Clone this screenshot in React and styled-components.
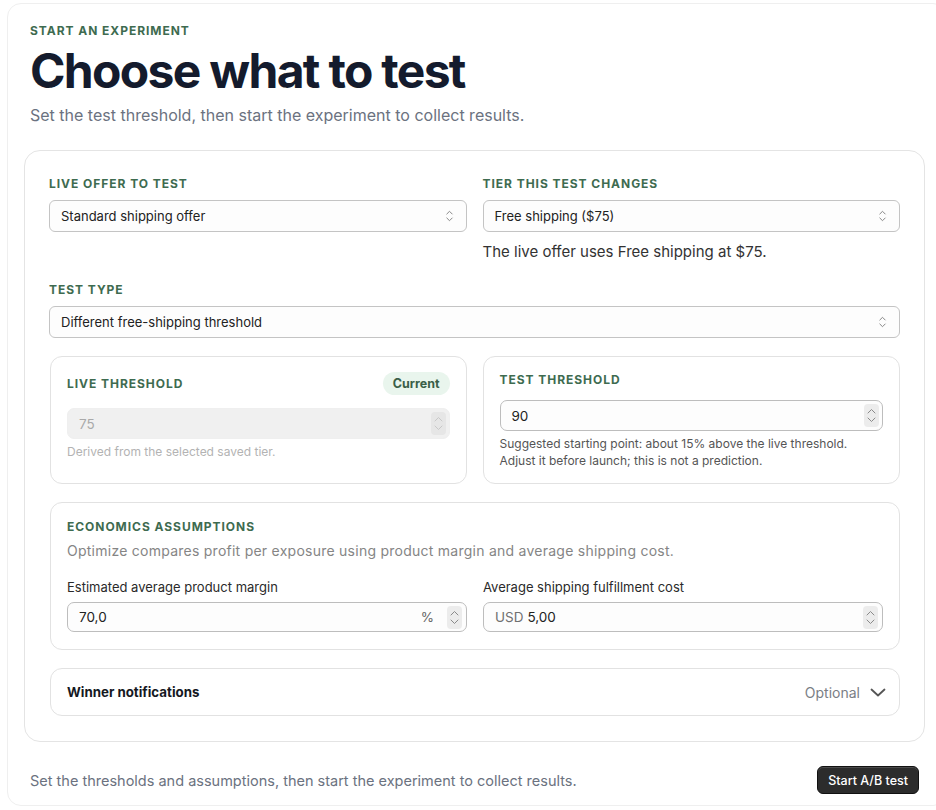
import React from "react";
import styled, { createGlobalStyle } from "styled-components";

const Global = createGlobalStyle`
  html, body { margin: 0; padding: 0; background: #fff; overflow: hidden; }
  body { font-family: Inter, "Noto Sans", Arial, sans-serif; color: #1f2328; -webkit-font-smoothing: antialiased; }
  * { box-sizing: border-box; }
`;

const Page = styled.div`
  padding: 3px 0 0 7px;
  width: 960px;
`;

const Shell = styled.div`
  width: 940px;
  border: 1px solid #efefef;
  border-radius: 14px;
  padding: 19px 0 11px 16px;
  background: #fff;
`;

const Header = styled.header`
  padding: 0 0 0 6px;
`;

const Eyebrow = styled.div`
  font-size: 12px;
  font-weight: 700;
  letter-spacing: 0.08em;
  color: #3e6b50;
  text-transform: uppercase;
  line-height: 16px;
`;

const Title = styled.h1`
  margin: 3px 0 0;
  font-size: 48px;
  font-weight: 700;
  letter-spacing: -0.035em;
  line-height: 57px;
  color: #141b2d;
`;

const Lead = styled.p`
  margin: 4px 0 0;
  font-size: 16px;
  line-height: 24px;
  color: #6b7280;
`;

const Card = styled.section`
  margin-top: 23px;
  width: 901px;
  border: 1px solid #e4e4e4;
  border-radius: 16px;
  padding: 25px 24px 25px;
  display: flex;
  flex-direction: column;
`;

const Grid = styled.div`
  display: grid;
  grid-template-columns: 1fr 1fr;
  column-gap: 16px;
  align-items: start;
  margin-top: ${(p) => p.$mt || 0}px;
`;

const Field = styled.div`
  display: flex;
  flex-direction: column;
  margin-top: ${(p) => p.$mt || 0}px;
`;

const Label = styled.div`
  font-size: 12px;
  font-weight: 700;
  letter-spacing: 0.08em;
  text-transform: uppercase;
  color: #3e6b50;
  line-height: 16px;
  margin-bottom: ${(p) => (p.$mb != null ? p.$mb : 8)}px;
`;

const SelectBox = styled.div`
  height: 32px;
  border: 1px solid #c4c4c4;
  border-radius: 6px;
  background: #fdfdfd;
  display: flex;
  align-items: center;
  justify-content: space-between;
  padding: 0 12px 0 11px;
  font-size: 13px;
  color: #222;
`;

const Note = styled.div`
  margin-top: 10px;
  font-size: 15px;
  line-height: 20px;
  color: #333;
`;

const UpDown = () => (
  <svg width="9" height="14" viewBox="0 0 9 14" fill="none" stroke="#888" strokeWidth="1" strokeLinecap="round" strokeLinejoin="round">
    <path d="M1.8 5 L4.5 2.3 L7.2 5" />
    <path d="M1.8 9 L4.5 11.7 L7.2 9" />
  </svg>
);

const Select = ({ children }) => (
  <SelectBox>
    <span>{children}</span>
    <UpDown />
  </SelectBox>
);

const Panel = styled.div`
  border: 1px solid #e2e2e2;
  border-radius: 12px;
  padding: ${(p) => p.$pad || "16px"};
  margin-left: ${(p) => p.$ml || 0}px;
  margin-top: ${(p) => p.$mt || 0}px;
  display: flex;
  flex-direction: column;
  min-height: ${(p) => p.$minh || 0}px;
`;

const PanelHead = styled.div`
  display: flex;
  align-items: center;
  justify-content: space-between;
  margin-bottom: 13px;
`;

const Pill = styled.span`
  background: #e9f5ed;
  color: #3a5f48;
  font-size: 12.5px;
  font-weight: 700;
  border-radius: 999px;
  padding: 4px 10px;
  line-height: 15px;
`;

const InputBox = styled.div`
  height: ${(p) => p.$h || 31}px;
  border: 1px solid ${(p) => (p.$disabled ? "#efefef" : "#bdbdbd")};
  background: ${(p) => (p.$disabled ? "#f0f0f0" : "#fdfdfd")};
  border-radius: 7px;
  display: flex;
  align-items: center;
  padding: 0 3px 0 11px;
  font-size: 13.5px;
  color: ${(p) => (p.$disabled ? "#a9a9a9" : "#222")};
`;

const Value = styled.span`
  flex: 1;
`;

const Prefix = styled.span`
  color: #707070;
  margin-right: 4px;
`;

const Suffix = styled.span`
  color: #666;
  margin-right: 13px;
`;

const SpinBox = styled.span`
  width: 15px;
  height: 23px;
  border-radius: 4px;
  background: ${(p) => (p.$disabled ? "#e6e6e6" : "#ececec")};
  display: flex;
  align-items: center;
  justify-content: center;
  margin-right: ${(p) => p.$mr || 0}px;
`;

const Spinner = ({ disabled, mr }) => (
  <SpinBox $disabled={disabled} $mr={mr}>
    <svg width="11" height="17" viewBox="0 0 11 17" fill="none" stroke={disabled ? "#c8c8c8" : "#8a8a8a"} strokeWidth="1" strokeLinecap="round" strokeLinejoin="round">
      <path d="M2 6 L5.5 2.5 L9 6" />
      <path d="M2 11 L5.5 14.5 L9 11" />
    </svg>
  </SpinBox>
);

const Help = styled.div`
  margin-top: ${(p) => p.$mt || 4}px;
  font-size: 12px;
  line-height: 17px;
  color: ${(p) => (p.$muted ? "#b3b3b3" : "#555")};
`;

const Desc = styled.div`
  margin-top: 6px;
  font-size: 14px;
  letter-spacing: 0.25px;
  line-height: 20px;
  color: #858585;
`;

const FieldLabel = styled.div`
  font-size: 13px;
  line-height: 16px;
  color: #2a2a2a;
  margin-bottom: 7px;
`;

const Disclosure = styled.div`
  margin: 18px 0 0 1px;
  border: 1px solid #e2e2e2;
  border-radius: 12px;
  height: 48px;
  display: flex;
  align-items: center;
  justify-content: space-between;
  padding: 0 12px 0 16px;
`;

const DiscTitle = styled.span`
  font-size: 13.3px;
  font-weight: 700;
  color: #15191f;
`;

const DiscSide = styled.span`
  display: flex;
  align-items: center;
  gap: 9px;
  font-size: 14px;
  color: #7a7e85;
`;

const Footer = styled.footer`
  width: 901px;
  margin-top: 24px;
  padding: 0 6px 0 6px;
  display: flex;
  align-items: center;
  justify-content: space-between;
`;

const FootText = styled.span`
  font-size: 14.5px;
  color: #6b7280;
`;

const Button = styled.button`
  height: 28px;
  padding: 0 10px;
  border-radius: 6px;
  border: 1px solid #111;
  background: #2c2c2c;
  color: #fff;
  font-family: inherit;
  font-size: 12.5px;
  font-weight: 500;
  box-shadow: inset 0 1px 0 rgba(255,255,255,0.15);
`;

export default function App() {
  return (
    <Page>
      <Global />
      <Shell>
        <Header>
          <Eyebrow>Start an experiment</Eyebrow>
          <Title>Choose what to test</Title>
          <Lead>Set the test threshold, then start the experiment to collect results.</Lead>
        </Header>

        <Card>
          <Grid>
            <Field>
              <Label>Live offer to test</Label>
              <Select>Standard shipping offer</Select>
            </Field>
            <Field>
              <Label>Tier this test changes</Label>
              <Select>Free shipping ($75)</Select>
              <Note>The live offer uses Free shipping at $75.</Note>
            </Field>
          </Grid>

          <Field $mt={20}>
            <Label>Test type</Label>
            <Select>Different free-shipping threshold</Select>
          </Field>

          <Grid $mt={18}>
            <Panel $minh={128} $pad="15px 16px 14px" $ml={1}>
              <PanelHead>
                <Label $mb={0}>Live threshold</Label>
                <Pill>Current</Pill>
              </PanelHead>
              <InputBox $disabled>
                <Value>75</Value>
                <Spinner disabled />
              </InputBox>
              <Help $muted>Derived from the selected saved tier.</Help>
            </Panel>
            <Panel $minh={128} $pad="15px 16px 14px">
              <Label $mb={12}>Test threshold</Label>
              <InputBox>
                <Value>90</Value>
                <Spinner />
              </InputBox>
              <Help>
                Suggested starting point: about 15% above the live threshold.
                <br />
                Adjust it before launch; this is not a prediction.
              </Help>
            </Panel>
          </Grid>

          <Panel $pad="16px 16px 17px" $mt={18} $ml={1}>
            <Label $mb={0}>Economics assumptions</Label>
            <Desc>Optimize compares profit per exposure using product margin and average shipping cost.</Desc>
            <Grid $mt={18}>
              <Field>
                <FieldLabel>Estimated average product margin</FieldLabel>
                <InputBox $h={30}>
                  <Value>70,0</Value>
                  <Suffix>%</Suffix>
                  <Spinner mr={1} />
                </InputBox>
              </Field>
              <Field>
                <FieldLabel>Average shipping fulfillment cost</FieldLabel>
                <InputBox $h={30}>
                  <Prefix>USD</Prefix>
                  <Value>5,00</Value>
                  <Spinner mr={1} />
                </InputBox>
              </Field>
            </Grid>
          </Panel>

          <Disclosure>
            <DiscTitle>Winner notifications</DiscTitle>
            <DiscSide>
              Optional
              <svg width="18" height="18" viewBox="0 0 18 18" fill="none" stroke="#555" strokeWidth="1.8" strokeLinecap="round" strokeLinejoin="round">
                <path d="M2.5 6.5 L9 12.5 L15.5 6.5" />
              </svg>
            </DiscSide>
          </Disclosure>
        </Card>

        <Footer>
          <FootText>Set the thresholds and assumptions, then start the experiment to collect results.</FootText>
          <Button>Start A/B test</Button>
        </Footer>
      </Shell>
    </Page>
  );
}
